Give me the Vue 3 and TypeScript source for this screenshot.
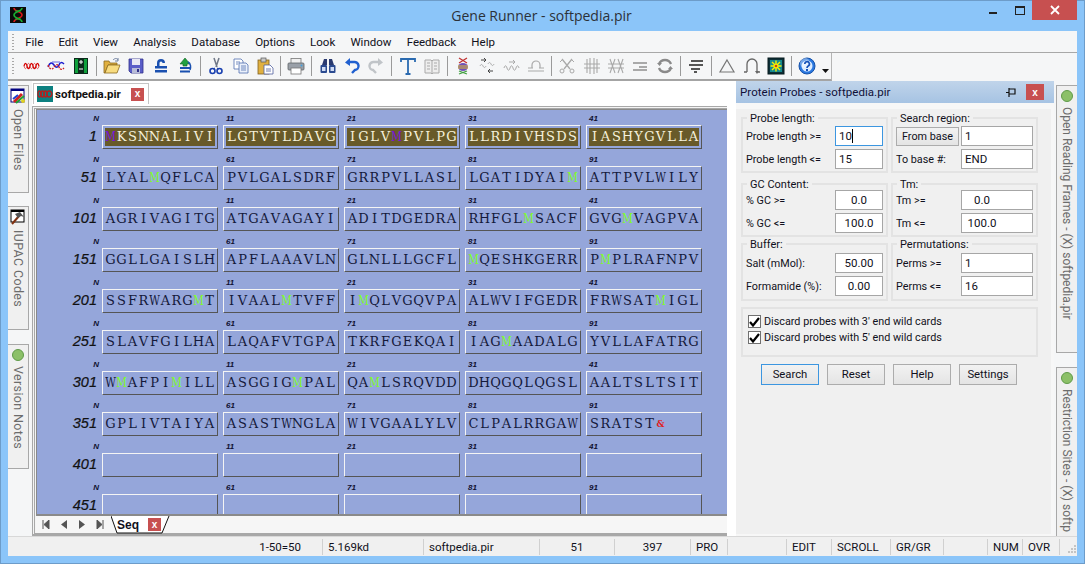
<script setup lang="ts">
type Tool = { sep?: boolean; svg?: string }

const menus = ['File', 'Edit', 'View', 'Analysis', 'Database', 'Options', 'Look', 'Window', 'Feedback', 'Help']

const g = '#a9a9a9'
const tools: Tool[] = [
  { svg: '<path d="M2 10c1-3.500 2-3.500 3 0s2 3.500 3 0 2-3.500 3 0 2 3.500 3 0 2-3.500 3 0" fill="none" stroke="#d40000" stroke-width="1.300"/><path d="M2 10c1 3.500 2 3.500 3 0s2-3.500 3 0 2 3.500 3 0 2-3.500 3 0 2 3.500 3 0" fill="none" stroke="#e05050" stroke-width="1"/>' },
  { svg: '<path d="M2 11c2-5 4-5 6-2s4 3 5 0 3-3 5-1" fill="none" stroke="#1a1ad0" stroke-width="1.500"/><path d="M2 9c2 5 4 5 6 2s4-3 5 0 3 3 5 1" fill="none" stroke="#d02020" stroke-width="1.300" stroke-dasharray="2 1"/><path d="M6 6h8" stroke="#6a6ae0"/>' },
  { svg: '<rect x="3" y="2" width="14" height="16" fill="#0c2a1c"/><rect x="4" y="3" width="3" height="14" fill="#0fa03c"/><rect x="13" y="3" width="3" height="14" fill="#0fa03c"/><path d="M8 6h4M10 4v4M8 13h4" stroke="#fff"/>' },
  { sep: true },
  { svg: '<path d="M2 5h5l1 2h7v2H6l-3 8H2z" fill="#e0b040" stroke="#8a6a20" stroke-width=".8"/><path d="M6 9h12l-3 8H3z" fill="#f8dc80" stroke="#8a6a20" stroke-width=".8"/><path d="M11 4c2-2 4-2 5 0" fill="none" stroke="#7080a0"/><path d="M16 2v3h-3" fill="none" stroke="#7080a0"/>' },
  { svg: '<path d="M3 3h14v14H5l-2-2z" fill="#5a5ec8" stroke="#30308a" stroke-width=".8"/><rect x="6" y="3" width="8" height="6" fill="#e8e8f4"/><rect x="6" y="12" width="8" height="5" fill="#b8bcd8"/><rect x="11" y="13" width="2" height="3" fill="#30308a"/>' },
  { svg: '<path d="M6 10V7a4 4 0 0 1 8 0h-2.500a1.500 1.500 0 0 0-3 0v3z" fill="#1a50b0"/><rect x="4" y="10" width="12" height="2.500" fill="#1a50b0"/><rect x="4" y="14" width="12" height="2.500" fill="#1a50b0"/>' },
  { svg: '<path d="M10 2l5 6h-3v2H8V8H5z" fill="#20a040" stroke="#106020" stroke-width=".6"/><rect x="5" y="11" width="10" height="2" fill="#1a50b0"/><rect x="5" y="14.500" width="10" height="2" fill="#1a50b0"/><path d="M13 6c3 1 3 6 2 8" fill="none" stroke="#1a50b0" stroke-width="1.500"/>' },
  { sep: true },
  { svg: '<path d="M8 2l3 9M13 2l-3 9" stroke="#707888" stroke-width="1.500"/><circle cx="6.500" cy="15" r="2.500" fill="none" stroke="#1a40b0" stroke-width="1.600"/><circle cx="13.500" cy="15" r="2.500" fill="none" stroke="#1a40b0" stroke-width="1.600"/><path d="M9 12l-2 1M11 12l2 1" stroke="#1a40b0"/>' },
  { svg: '<path d="M3 3h7l2 2v8H3z" fill="#fff" stroke="#5070b0" stroke-width=".8"/><path d="M8 7h7l2 2v8H8z" fill="#eaf0fb" stroke="#5070b0" stroke-width=".8"/><path d="M10 10h5M10 12h5M10 14h5M5 6h4M5 8h2" stroke="#5070b0" stroke-width=".8"/>' },
  { svg: '<rect x="3" y="4" width="11" height="14" fill="#e0b040" stroke="#806020" stroke-width=".8"/><rect x="6" y="2" width="5" height="4" fill="#c8c8c8" stroke="#555" stroke-width=".7"/><path d="M9 9h6l3 3v6H9z" fill="#fff" stroke="#5060a0" stroke-width=".8"/><path d="M11 13h5M11 15h5" stroke="#5060a0" stroke-width=".8"/>' },
  { sep: true },
  { svg: '<rect x="5" y="2.500" width="10" height="5" fill="#f0f0f0" stroke="#777" stroke-width=".8"/><rect x="2" y="7" width="16" height="7" rx="1" fill="#9aa0a8" stroke="#606468" stroke-width=".8"/><rect x="5" y="12" width="10" height="6" fill="#fff" stroke="#777" stroke-width=".8"/><circle cx="15.500" cy="9.500" r="1" fill="#40a0e0"/>' },
  { sep: true },
  { svg: '<path d="M4 9l2-6h3v6zM11 9V3h3l2 6z" fill="#2a3a70"/><rect x="2.500" y="9" width="6.500" height="8" rx="1" fill="#2a4a90"/><rect x="11" y="9" width="6.500" height="8" rx="1" fill="#2a4a90"/><rect x="4" y="11" width="3.500" height="4" fill="#d0dcf4"/><rect x="12.500" y="11" width="3.500" height="4" fill="#d0dcf4"/>' },
  { svg: '<path d="M6 6h6a4 4 0 0 1 1 8l-3 3" fill="none" stroke="#2060d0" stroke-width="2.400"/><path d="M8 2L3 6.500 8 10z" fill="#2060d0"/>' },
  { svg: '<path d="M14 6H8a4 4 0 0 0-1 8l3 3" fill="none" stroke="#c0c4c8" stroke-width="2.400"/><path d="M12 2l5 4.500-5 3.500z" fill="#c0c4c8"/>' },
  { sep: true },
  { svg: '<path d="M3 6V3h14v3M10 3v15M7.500 18h5" fill="none" stroke="#2a6ab0" stroke-width="1.800"/>' },
  { svg: `<path d="M3 4h6l1 1 1-1h6v13h-6l-1 1-1-1H3z" fill="#eee" stroke="${g}"/><path d="M5 7h3M5 10h3M5 13h3M12 7h3M12 10h3M12 13h3M10 5v13" stroke="${g}"/>` },
  { sep: true },
  { svg: '<path d="M6 2l8 5M14 2L6 7" stroke="#c03030" stroke-width="1.300"/><ellipse cx="10" cy="11" rx="5" ry="4" fill="#7050b8"/><path d="M5 10h10M5 12h10" stroke="#e0c030" stroke-width="1.200"/><path d="M6 15l8 3M14 15l-8 3" stroke="#40a040" stroke-width="1.300"/>' },
  { svg: `<path d="M4 4h5M7 2l2 2-2 2" fill="none" stroke="#444"/><path d="M16 15h-5M13 13l-2 2 2 2" fill="none" stroke="#444"/><path d="M3 10c1-2 2-2 3 0s2 2 3 0M11 8c1-2 2-2 3 0s2 2 3 0" fill="none" stroke="${g}"/>` },
  { svg: `<path d="M7 6h6M11 4l2 2-2 2" fill="none" stroke="${g}"/><path d="M2 12c1-3 2-3 3 0s2 3 3 0 2-3 3 0 2 3 3 0 2-3 3 0" fill="none" stroke="${g}"/>` },
  { svg: `<path d="M6 12V9a4 4 0 0 1 8 0v3" fill="none" stroke="${g}" stroke-width="1.200"/><path d="M2 12h5M13 12h5M2 15h16" stroke="${g}" stroke-width="1.200"/>` },
  { sep: true },
  { svg: `<path d="M5 3l8 10M15 3L7 13" stroke="${g}" stroke-width="1.300"/><circle cx="5" cy="15" r="2" fill="none" stroke="${g}"/><circle cx="15" cy="15" r="2" fill="none" stroke="${g}"/><path d="M3 6l3-3M14 3l3 3" stroke="${g}"/>` },
  { svg: `<path d="M5 3v14M8 2v16M12 2v16M15 3v14M2 8h16M2 12h16" stroke="${g}" stroke-width="1.100"/>` },
  { svg: `<path d="M4 3l5 14M9 3L4 17M12 3l5 14M17 3l-5 14M2 8h16M2 12h16" stroke="${g}" stroke-width="1.100"/>` },
  { svg: `<path d="M3 7h14M9 11h8M3 14h14" stroke="${g}" stroke-width="2"/>` },
  { svg: `<path d="M4 8a6.500 6.500 0 0 1 12 0M16 12a6.500 6.500 0 0 1-12 0" fill="none" stroke="#8a8a8a" stroke-width="2.400"/><path d="M2 7h5l-2.500 3zM13 13h5l-2.500-3z" fill="#8a8a8a"/>` },
  { sep: true },
  { svg: '<path d="M5 5h12M3 9h14M5 13h9M8 16h3" stroke="#555" stroke-width="2"/>' },
  { sep: true },
  { svg: '<path d="M10 4l7 12H3z" fill="none" stroke="#777" stroke-width="1.200"/>' },
  { svg: '<path d="M5 16V8a5 5 0 0 1 10 0v8M2 16h3M15 16h3" fill="none" stroke="#666" stroke-width="1.300"/><path d="M13 15l2 3 2-3" fill="#666"/>' },
  { svg: '<rect x="2" y="2" width="16" height="16" fill="#0d3038" stroke="#06181c"/><rect x="4" y="4" width="12" height="12" fill="#148a90"/><circle cx="10" cy="10" r="2.500" fill="#f8f000"/><path d="M10 4.500v11M4.500 10h11M6 6l8 8M14 6l-8 8" stroke="#f8f000" stroke-width="1.400"/><circle cx="10" cy="10" r="1.300" fill="#d04010"/>' },
  { sep: true },
  { svg: '<circle cx="10" cy="10" r="8" fill="#2a78e0" stroke="#1450a8"/><circle cx="10" cy="10" r="5.500" fill="#dcecff"/><circle cx="8" cy="7" r="5" fill="#fff" opacity=".35"/><path d="M7.800 8a2.300 2.300 0 1 1 3.400 2c-1 .6-1.200 1-1.200 2" fill="none" stroke="#1450b8" stroke-width="1.700"/><rect x="9" y="13" width="2" height="2" fill="#1450b8"/>' },
]

const blocks = [
  'MKSNNALIVI LGTVTLDAVG IGLVMPVLPG LLRDIVHSDS IASHYGVLLA',
  'LYALMQFLCA PVLGALSDRF GRRPVLLASL LGATIDYAIM ATTPVLWILY',
  'AGRIVAGITG ATGAVAGAYI ADITDGEDRA RHFGLMSACF GVGMVAGPVA',
  'GGLLGAISLH APFLAAAVLN GLNLLLGCFL MQESHKGERR PMPLRAFNPV',
  'SSFRWARGMT IVAALMTVFF IMQLVGQVPA ALWVIFGEDR FRWSATMIGL',
  'SLAVFGILHA LAQAFVTGPA TKRFGEKQAI IAGMAADALG YVLLAFATRG',
  'WMAFPIMILL ASGGIGMPAL QAMLSRQVDD DHQGQLQGSL AALTSLTSIT',
  'GPLIVTAIYA ASASTWNGLA WIVGAALYLV CLPALRRGAW SRATST&',
  '    ',
  '    ',
]

const rows = blocks.map((line, i) => ({
  start: i * 50 + 1,
  marks: i % 2 === 0 ? ['N', '11', '21', '31', '41'] : ['N', '61', '71', '81', '91'],
  selected: i === 0,
  cells: line.split(' ').map((s) => s.split('')),
}))

type Field = { label?: string; button?: string; value: string; kind?: string }
type Group = { title: string; cls: string; inputs: string; rows: Field[] }

const groups: Group[] = [
  { title: 'Probe length:', cls: 'g-top', inputs: 'short', rows: [
    { label: 'Probe length >=', value: '10', kind: 'focus' },
    { label: 'Probe length <=', value: '15' },
  ] },
  { title: 'Search region:', cls: 'g-top', inputs: 'long', rows: [
    { button: 'From base', value: '1' },
    { label: 'To base #:', value: 'END' },
  ] },
  { title: 'GC Content:', cls: 'g-mid', inputs: 'short', rows: [
    { label: '% GC >=', value: '0.0', kind: 'mid' },
    { label: '% GC <=', value: '100.0', kind: 'mid' },
  ] },
  { title: 'Tm:', cls: 'g-mid', inputs: 'long', rows: [
    { label: 'Tm >=', value: '0.0', kind: 'tm' },
    { label: 'Tm <=', value: '100.0', kind: 'tm' },
  ] },
  { title: 'Buffer:', cls: 'g-buf', inputs: 'short', rows: [
    { label: 'Salt (mMol):', value: '50.00', kind: 'mid' },
    { label: 'Formamide (%):', value: '0.00', kind: 'mid' },
  ] },
  { title: 'Permutations:', cls: 'g-buf', inputs: 'long', rows: [
    { label: 'Perms >=', value: '1' },
    { label: 'Perms <=', value: '16' },
  ] },
]

const statusCols = [
  { text: '1-50=50', w: 315, right: true },
  { text: '5.169kd', w: 101 },
  { text: 'softpedia.pir', w: 116 },
  { text: '51', w: 75, mid: true },
  { text: '397', w: 76, mid: true },
  { text: 'PRO', w: 37 },
  { text: '', w: 59 },
  { text: 'EDIT', w: 45 },
  { text: 'SCROLL', w: 59 },
  { text: 'GR/GR', w: 53 },
  { text: '', w: 44 },
  { text: 'NUM', w: 35 },
  { text: 'OVR', w: 37 },
]
</script>

<template>
  <div class="window">
    <header class="titlebar">
      <div class="title-left">
        <svg class="app-icon" width="16" height="16" viewBox="0 0 16 16">
          <rect width="16" height="16" fill="#0a0a0a" />
          <path d="M4 1c0 4 8 3 8 7s-8 3-8 7" fill="none" stroke="#d81818" stroke-width="1.600" />
          <path d="M12 1c0 4-8 3-8 7s8 3 8 7" fill="none" stroke="#18b030" stroke-width="1.600" />
          <path d="M5 4h6M5 12h6" stroke="#18b030" />
        </svg>
      </div>
      <div class="title-text">Gene Runner - softpedia.pir</div>
      <div class="win-btns">
        <span class="win-btn"><i class="min-glyph"></i></span>
        <span class="win-btn"><i class="max-glyph"></i></span>
        <span class="win-close">
          <svg width="10" height="10" viewBox="0 0 10 10"><path d="M1 1l8 8M9 1L1 9" stroke="#fff" stroke-width="1.800" /></svg>
        </span>
      </div>
    </header>

    <div class="client">
      <nav class="menubar">
        <span class="grip"></span>
        <span v-for="m in menus" :key="m">{{ m }}</span>
      </nav>

      <div class="dock">
        <div class="toolbar">
          <span class="grip"></span>
          <template v-for="(t, i) in tools" :key="i">
            <span v-if="t.sep" class="tool-sep"></span>
            <svg v-else class="tool" width="20" height="20" viewBox="0 0 20 20" v-html="t.svg"></svg>
          </template>
          <svg class="tool-drop" width="7" height="4" viewBox="0 0 7 4"><path d="M0 0h7L3.500 4z" fill="#111" /></svg>
        </div>
      </div>

      <main class="workspace">
        <aside class="left-rail">
          <div class="rail-tab open-tab">
            <svg class="rail-icon" width="16" height="16" viewBox="0 0 16 16">
              <rect x="1" y="1" width="13" height="13" fill="#fff" stroke="#000080" />
              <rect x="1" y="1" width="13" height="2" fill="#000080" />
              <path d="M4 14l8-8" stroke="#d02020" stroke-width="3" />
              <path d="M6 15l8-7" stroke="#20a030" stroke-width="2" />
              <path d="M3 11l5-4" stroke="#2040d0" stroke-width="2" />
              <circle cx="13" cy="13" r="2" fill="#e0d020" />
            </svg>
            <span class="rail-text">Open Files</span>
          </div>
          <div class="rail-tab iupac-tab">
            <svg class="rail-icon" width="16" height="16" viewBox="0 0 16 16">
              <rect x="1" y="1" width="13" height="12" fill="#fff" stroke="#000" />
              <rect x="1" y="1" width="13" height="2" fill="#000" />
              <path d="M2 15l7-8" stroke="#803010" stroke-width="2" />
              <path d="M5 5l5-2 4 5-3-1-3 2z" fill="#555" />
            </svg>
            <span class="rail-text">IUPAC Codes</span>
          </div>
          <div class="rail-tab notes-tab">
            <span class="dot"></span>
            <span class="rail-text">Version Notes</span>
          </div>
        </aside>

        <section class="doc">
          <div class="doc-tabs">
            <div class="doc-tab">
              <svg width="16" height="16" viewBox="0 0 16 16">
                <rect width="16" height="16" fill="#0c8080" />
                <path d="M1 8c0-4 3-4 3 0s3 4 3 0 3-4 3 0 4 4 5 0" fill="none" stroke="#b02020" stroke-width="1.400" />
                <path d="M1 8c0 4 3 4 3 0s3-4 3 0 3 4 3 0 4-4 5 0" fill="none" stroke="#b02020" stroke-width="1.400" />
              </svg>
              <span class="doc-name">softpedia.pir</span>
              <span class="red-x">x</span>
            </div>
          </div>

          <div class="frame">
            <div class="frame-inner">
              <div class="seq-view">
                <div v-for="r in rows" :key="r.start" class="seq-row">
                  <div class="marks">
                    <span v-for="(m, mi) in r.marks" :key="mi" class="mark" :class="{ 'mark-n': m === 'N' }">{{ m }}</span>
                  </div>
                  <div class="cells">
                    <span class="row-no">{{ r.start }}</span>
                    <div v-for="(c, ci) in r.cells" :key="ci" class="cell">
                      <div class="cell-in" :class="{ selected: r.selected }">
                        <span
                          v-for="(ch, li) in c"
                          :key="li"
                          class="aa"
                          :class="{ met: ch === 'M', broad: ch === 'M' || ch === 'W', stop: ch === '&' }"
                        >{{ ch }}</span>
                      </div>
                    </div>
                  </div>
                </div>
              </div>

              <div class="sheet-bar">
                <div class="sheet-nav">
                  <svg width="8" height="9" viewBox="0 0 8 9"><path d="M1 0v9M7 0v9L2 4.500z" stroke="#555" fill="#555" stroke-width="1" /></svg>
                  <svg width="8" height="9" viewBox="0 0 8 9"><path d="M7 0v9L1 4.500z" fill="#555" /></svg>
                  <svg width="8" height="9" viewBox="0 0 8 9"><path d="M1 0v9l6-4.500z" fill="#555" /></svg>
                  <svg width="8" height="9" viewBox="0 0 8 9"><path d="M1 0v9l5-4.500zM7 0v9" stroke="#555" fill="#555" stroke-width="1" /></svg>
                </div>
                <div class="sheet-tab">
                  <svg class="sheet-shape" width="60" height="18" viewBox="0 0 60 18"><path d="M0 0l6 17h45l7-17" fill="#fff" stroke="#111" /></svg>
                  <span class="sheet-name">Seq</span>
                  <span class="red-x small">x</span>
                </div>
              </div>
            </div>
          </div>
        </section>

        <section class="panel">
          <div class="panel-title">
            <span>Protein Probes - softpedia.pir</span>
            <svg class="pin" width="11" height="9" viewBox="0 0 11 9"><path d="M0 4.500h3M3 0v9M3 1h6v5H3M4 6h5" fill="none" stroke="#111" stroke-width="1.200" /></svg>
            <span class="panel-close">x</span>
          </div>
          <div class="panel-body">
            <div class="form-grid">
              <div v-for="g2 in groups" :key="g2.title" class="group" :class="g2.cls">
                <span class="legend">{{ g2.title }}</span>
                <div v-for="f in g2.rows" :key="f.value" class="field-row">
                  <span v-if="f.button" class="from-btn">{{ f.button }}</span>
                  <span v-else>{{ f.label }}</span>
                  <span class="field" :class="[g2.inputs, f.kind]">{{ f.value }}<i v-if="f.kind === 'focus'" class="caret"></i></span>
                </div>
              </div>
              <div class="group wide">
                <label class="check"><span class="box"><svg width="11" height="10" viewBox="0 0 11 10"><path d="M1 5l3 3.500L10 1" fill="none" stroke="#000" stroke-width="2.200" /></svg></span>Discard probes with 3' end wild cards</label>
                <label class="check"><span class="box"><svg width="11" height="10" viewBox="0 0 11 10"><path d="M1 5l3 3.500L10 1" fill="none" stroke="#000" stroke-width="2.200" /></svg></span>Discard probes with 5' end wild cards</label>
              </div>
            </div>
            <div class="actions">
              <span class="act focus">Search</span>
              <span class="act">Reset</span>
              <span class="act">Help</span>
              <span class="act">Settings</span>
            </div>
          </div>
        </section>

        <aside class="right-rail">
          <div class="rail-tab orf-tab">
            <span class="dot"></span>
            <span class="rail-text">Open Reading Frames - (X) softpedia.pir</span>
          </div>
          <div class="rail-tab sites-tab">
            <span class="dot"></span>
            <span class="rail-text">Restriction Sites - (X) softp</span>
          </div>
        </aside>
      </main>

      <footer class="statusbar">
        <span
          v-for="(s, i) in statusCols"
          :key="i"
          class="stat"
          :class="{ right: s.right, mid: s.mid }"
          :style="{ width: s.w + 'px' }"
        >{{ s.text }}</span>
        <svg class="size-grip" width="12" height="12" viewBox="0 0 12 12">
          <path d="M9 2h2v2H9zM6 5h2v2H6zM9 5h2v2H9zM3 8h2v2H3zM6 8h2v2H6zM9 8h2v2H9z" fill="#c4c4c4" />
        </svg>
      </footer>
    </div>
  </div>
</template>

<style>
html,
body {
  margin: 0;
  overflow: hidden;
}
</style>

<style scoped>
.window {
  box-sizing: border-box;
  width: 1085px;
  height: 564px;
  display: flex;
  flex-direction: column;
  padding: 0 7px 7px;
  background: #8bc5f9;
  border: 1px solid #6d9cc9;
  font-family: Roboto, 'Liberation Sans', sans-serif;
  font-size: 11.5px;
  color: #101020;
}

.titlebar {
  height: 30px;
  flex-shrink: 0;
  display: grid;
  grid-template-columns: 1fr auto 1fr;
  align-items: start;
}

.title-left {
  padding: 6px 0 0 2px;
}

.app-icon {
  display: block;
}

.title-text {
  padding-top: 6px;
  margin-right: 2px;
  font-family: 'Open Sans', sans-serif;
  font-size: 14px;
  line-height: 18px;
  color: #2b3138;
}

.win-btns {
  display: flex;
  justify-content: flex-end;
  margin-top: -1px;
}

.win-btn {
  width: 27px;
  height: 20px;
  display: flex;
  align-items: center;
  justify-content: center;
}

.min-glyph {
  width: 8px;
  height: 2px;
  margin-top: 6px;
  background: #222;
}

.max-glyph {
  box-sizing: border-box;
  width: 10px;
  height: 9px;
  border: 1px solid #222;
  border-top-width: 2px;
}

.win-close {
  width: 45px;
  height: 20px;
  margin-left: -1px;
  display: flex;
  align-items: center;
  justify-content: center;
  background: #c75050;
}

.client {
  flex: 1;
  min-height: 0;
  display: flex;
  flex-direction: column;
  background: #f5f6f7;
}

.menubar {
  height: 22px;
  flex-shrink: 0;
  display: flex;
  align-items: center;
  gap: 15.2px;
  padding-left: 4px;
  box-sizing: border-box;
  border-bottom: 1px solid #a8a8a8;
  font-size: 11.5px;
  background: #f5f6f7;
}

.grip {
  width: 2px;
  height: 16px;
  margin-right: -4px;
  flex-shrink: 0;
  background: repeating-linear-gradient(to bottom, #a8a8a8 0 1px, transparent 1px 3px);
}

.dock {
  height: 28px;
  flex-shrink: 0;
  display: flex;
  background: #f5f6f7;
}

.toolbar {
  box-sizing: border-box;
  width: 824px;
  height: 28px;
  display: flex;
  align-items: center;
  padding-left: 4px;
  border-right: 1px solid #b4b4b4;
  border-bottom: 2px solid #a4a4a4;
}

.toolbar .grip {
  margin-right: 6px;
}

.tool {
  flex-shrink: 0;
  width: 20px;
  margin: 0 2.15px;
}

.tool-sep {
  flex-shrink: 0;
  width: 1px;
  height: 20px;
  margin: 0 3.05px;
  background: #9a9a9a;
}

.tool-drop {
  margin: 9px 0 0 3px;
}

.workspace {
  flex: 1;
  min-height: 0;
  display: flex;
  background: #fff;
}

.left-rail {
  width: 24px;
  flex-shrink: 0;
  box-sizing: border-box;
  padding-top: 4px;
  display: flex;
  flex-direction: column;
  background: #f5f6f7;
}

.rail-tab {
  box-sizing: border-box;
  display: flex;
  flex-direction: column;
  align-items: center;
  overflow: hidden;
  background: #f0f0f0;
  border: 1px solid #a8a8a8;
}

.left-rail .rail-tab {
  width: 21px;
  border-left: 0;
}

.open-tab {
  height: 108px;
}

.iupac-tab {
  height: 124px;
  margin-top: 13px;
}

.notes-tab {
  height: 125px;
  margin-top: 14px;
}

.rail-icon {
  margin: 2px 0 0;
  flex-shrink: 0;
}

.rail-text {
  margin-top: 5px;
  writing-mode: vertical-rl;
  white-space: nowrap;
  font-size: 12.5px;
  letter-spacing: 0.35px;
  color: #6c6c6c;
}

.right-rail .rail-text {
  font-size: 12px;
  letter-spacing: 0;
}

.dot {
  width: 12px;
  height: 12px;
  margin-top: 4px;
  flex-shrink: 0;
  border-radius: 50%;
  background: #8cc068;
  border: 1px solid #5f9a48;
  box-sizing: border-box;
}

.doc {
  width: 704px;
  flex-shrink: 0;
  display: flex;
  flex-direction: column;
  background: #fff;
}

.doc-tabs {
  height: 25px;
  flex-shrink: 0;
  box-sizing: border-box;
  padding: 2px 0 0 1px;
  background: #fff;
}

.doc-tab {
  box-sizing: border-box;
  width: 116px;
  height: 21px;
  display: flex;
  align-items: center;
  padding-left: 3px;
  border: 1px solid #c4c4c4;
  border-bottom: 0;
}

.doc-name {
  margin-left: 2px;
  font-family: Roboto, sans-serif;
  font-size: 11.5px;
  font-weight: 700;
  color: #111;
}

.red-x {
  width: 13px;
  height: 13px;
  margin-left: auto;
  margin-right: 4px;
  display: flex;
  align-items: center;
  justify-content: center;
  background: #c75050;
  font-family: 'Liberation Sans', sans-serif;
  font-size: 10px;
  font-weight: 700;
  line-height: 1;
  color: #fff;
}

.frame {
  flex: 1;
  min-height: 0;
  width: 695px;
  box-sizing: border-box;
  padding: 1px 0 0 1px;
  border: 1px solid #a8a8a8;
  border-bottom-width: 2px;
  border-right-width: 0;
  background: #f4f4f4;
}

.frame-inner {
  box-sizing: border-box;
  height: 100%;
  display: flex;
  flex-direction: column;
  border-top: 1px solid #a8a8a8;
  border-left: 1px solid #a8a8a8;
  border-bottom: 1px solid #a8a8a8;
}

.seq-view {
  flex: 1;
  min-height: 0;
  overflow: hidden;
  margin-left: 1px;
  border-top: 1px solid #8a8a8a;
  border-left: 1px solid #8a8a8a;
  padding-top: 2px;
  background: #95a6da;
}

.seq-row {
  height: 41px;
}

.marks {
  height: 13px;
  display: flex;
}

.mark {
  width: 121px;
  flex-shrink: 0;
  font-family: 'Liberation Sans', sans-serif;
  font-size: 8px;
  font-weight: 700;
  font-style: italic;
  line-height: 13px;
  color: #101030;
}

.mark-n {
  width: 62px;
  margin-right: 127px;
  text-align: right;
}

.cells {
  height: 24px;
  display: flex;
  gap: 5px;
}

.row-no {
  width: 60px;
  box-sizing: border-box;
  text-align: right;
  font-family: 'Liberation Sans', sans-serif;
  font-size: 14.5px;
  font-style: italic;
  line-height: 23px;
  color: #111;
  -webkit-text-stroke: 0.2px #111;
}

.cell {
  box-sizing: border-box;
  width: 116px;
  height: 24px;
  flex-shrink: 0;
  padding: 2px;
  border: 1px solid;
  border-color: #f4f4f4 #555 #555 #f4f4f4;
}

.cell-in {
  height: 18px;
  display: flex;
  align-items: center;
  color: #14193a;
}

.cell-in.selected {
  background: #685a29;
  color: #f5f0da;
}

.aa {
  width: 11px;
  flex-shrink: 0;
  display: flex;
  justify-content: center;
  font-family: 'DejaVu Serif', 'Liberation Serif', serif;
  font-size: 13px;
  line-height: 18px;
}

.aa.broad {
  transform: scaleX(0.8);
}

.met {
  color: #7fff2a;
}

.selected .met {
  color: #7a10e0;
}

.stop {
  font-size: 9px;
  font-weight: 700;
  color: #e02020;
}

.sheet-bar {
  height: 19px;
  flex-shrink: 0;
  display: flex;
  background: #f6f6f6;
  border-top: 2px solid #8a8a8a;
  box-sizing: border-box;
  margin-left: 1px;
}

.sheet-nav {
  width: 75px;
  flex-shrink: 0;
  display: flex;
  align-items: center;
  gap: 10px;
  padding-left: 6px;
  box-sizing: border-box;
}

.sheet-tab {
  position: relative;
  width: 60px;
  height: 17px;
  display: flex;
  align-items: center;
  padding-left: 6px;
  box-sizing: border-box;
}

.sheet-shape {
  position: absolute;
  left: 0;
  top: 0;
}

.sheet-name {
  position: relative;
  font-family: 'Liberation Sans', sans-serif;
  font-size: 12px;
  font-weight: 700;
}

.red-x.small {
  position: relative;
  margin-left: 9px;
  margin-right: 0;
}

.panel {
  width: 318px;
  flex-shrink: 0;
  display: flex;
  flex-direction: column;
  background: #f7f7f7;
}

.panel-title {
  height: 22px;
  flex-shrink: 0;
  display: flex;
  align-items: center;
  padding-left: 4px;
  background: linear-gradient(to bottom, #c0d4ea, #a6c3e3);
  font-size: 11.5px;
  letter-spacing: 0.05px;
  color: #101038;
}

.pin {
  margin-left: auto;
}

.panel-close {
  width: 18px;
  height: 16px;
  margin: 0 10px 0 9px;
  display: flex;
  align-items: center;
  justify-content: center;
  background: #c75050;
  font-family: 'Liberation Sans', sans-serif;
  font-size: 10px;
  font-weight: 700;
  color: #fff;
}

.panel-body {
  width: 315px;
  flex: 1;
  box-sizing: border-box;
  margin-top: 6px;
  margin-bottom: 2px;
  padding: 8px 0 0 5px;
  background: #f0f0f0;
  font-size: 10.8px;
}

.form-grid {
  display: grid;
  grid-template-columns: 147px 147px;
  grid-template-rows: 56px 58px 58px 50px;
  column-gap: 3px;
  row-gap: 6px;
}

.group {
  position: relative;
  box-sizing: border-box;
  display: flex;
  flex-direction: column;
  gap: 3px;
  padding: 8px 3px 0;
  border: 2px solid #e3e3e3;
}

.g-top {
  padding-top: 7px;
}

.g-mid {
  margin-top: 4px;
  height: 54px;
  padding-top: 5px;
}

.legend {
  position: absolute;
  top: -7px;
  left: 4px;
  padding: 0 3px;
  background: #f0f0f0;
  font-size: 11px;
  line-height: 14px;
}

.field-row {
  height: 20px;
  display: flex;
  align-items: center;
  justify-content: space-between;
}

.field {
  box-sizing: border-box;
  height: 20px;
  padding: 0 3px;
  display: flex;
  align-items: center;
  background: #fff;
  border: 1px solid #a6a6a6;
  font-size: 11.5px;
}

.field.short {
  width: 48px;
}

.field.long {
  width: 72px;
}

.field.focus {
  border-color: #3c96e0;
}

.field.mid {
  justify-content: center;
}

.field.tm {
  padding-right: 33px;
  justify-content: center;
}

.caret {
  width: 1px;
  height: 14px;
  background: #000;
}

.from-btn {
  box-sizing: border-box;
  width: 63px;
  height: 19px;
  display: flex;
  align-items: center;
  justify-content: center;
  background: linear-gradient(to bottom, #f2f2f2, #e4e4e4);
  border: 1px solid #acacac;
}

.wide {
  grid-column: 1 / 3;
  padding: 6px 5px 0;
}

.check {
  height: 13px;
  display: flex;
  align-items: center;
  gap: 3px;
  white-space: nowrap;
}

.box {
  box-sizing: border-box;
  width: 13px;
  height: 13px;
  display: flex;
  align-items: center;
  justify-content: center;
  background: #fff;
  border: 1px solid #707070;
}

.actions {
  display: flex;
  gap: 8px;
  margin-top: 7px;
  padding-left: 20px;
}

.act {
  box-sizing: border-box;
  width: 58px;
  height: 21px;
  display: flex;
  align-items: center;
  justify-content: center;
  background: linear-gradient(to bottom, #f2f2f2, #e4e4e4);
  border: 1px solid #acacac;
  font-size: 11.3px;
}

.act.focus {
  border-color: #3c96e0;
}

.right-rail {
  flex: 1;
  box-sizing: border-box;
  padding: 4px 0 0 2px;
  display: flex;
  flex-direction: column;
  background: #f5f6f7;
}

.right-rail .rail-tab {
  width: 21px;
  border-right: 0;
  align-self: flex-end;
}

.orf-tab {
  height: 268px;
}

.sites-tab {
  flex: 1;
  min-height: 0;
  margin-top: 14px;
  border-bottom: 0 !important;
}

.statusbar {
  height: 20px;
  flex-shrink: 0;
  display: flex;
  align-items: center;
  box-sizing: border-box;
  background: #f0f0f0;
  border-top: 1px solid #d8d8d8;
  font-size: 11.5px;
}

.stat {
  box-sizing: border-box;
  height: 16px;
  flex-shrink: 0;
  padding-left: 5px;
  line-height: 16px;
  white-space: nowrap;
  border-right: 1px solid #d0d0d0;
}

.stat.right {
  padding-right: 21px;
  text-align: right;
}

.stat.mid {
  padding-left: 0;
  text-align: center;
}

.size-grip {
  margin: 5px 0 0 auto;
}
</style>
